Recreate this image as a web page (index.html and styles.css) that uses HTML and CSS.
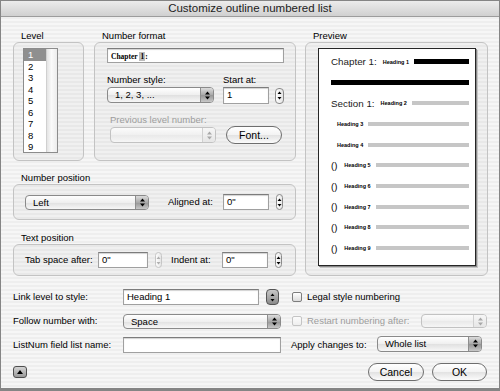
FILE: index.html
```html
<!DOCTYPE html>
<html>

<head>
    <meta charset="UTF-8">
    <title>Customize outline numbered list</title>
    <link rel="stylesheet" href="styles.css">
</head>

<body>
<div class="window">
    <div class="titlebar">Customize outline numbered list</div>

    <div class="content">
        <div class="top">
            <div class="left-col">
                <div class="pair">
                    <!-- Level -->
                    <div class="group level">
                        <div class="glabel">Level</div>
                        <div class="gbox">
                            <div class="listbox">
                                <div class="items">
                                    <div class="item sel">1</div>
                                    <div class="item">2</div>
                                    <div class="item">3</div>
                                    <div class="item">4</div>
                                    <div class="item">5</div>
                                    <div class="item">6</div>
                                    <div class="item">7</div>
                                    <div class="item">8</div>
                                    <div class="item">9</div>
                                </div>
                                <div class="track"></div>
                            </div>
                        </div>
                    </div>

                    <!-- Number format -->
                    <div class="group numfmt">
                        <div class="glabel">Number format</div>
                        <div class="gbox">
                            <div class="field fmt-field"><span class="fmt-text">Chapter <span class="code">1</span>:</span></div>
                            <div class="fmt-row">
                                <div class="lbl">Number style:</div>
                                <div class="lbl">Start at:</div>
                                <div class="popup w-style">
                                    <span class="val">1, 2, 3, ...</span>
                                    <span class="arrows"><svg width="5" height="9" viewBox="0 0 5 9"><path d="M0 3.5 2.5 .5 5 3.5ZM0 5.5 2.5 8.5 5 5.5Z"/></svg></span>
                                </div>
                                <div class="spin-wrap">
                                    <div class="field w-start">1</div>
                                    <div class="spinner sp-start"><svg width="5" height="11" viewBox="0 0 5 11"><path d="M.5 4 2.5 1.5 4.5 4ZM.5 7 2.5 9.5 4.5 7Z"/></svg></div>
                                </div>
                            </div>
                            <div class="lbl dim prev-lbl">Previous level number:</div>
                            <div class="prev-row">
                                <div class="popup off w-prev">
                                    <span class="val"></span>
                                    <span class="arrows"><svg width="5" height="9" viewBox="0 0 5 9"><path d="M0 3.5 2.5 .5 5 3.5ZM0 5.5 2.5 8.5 5 5.5Z"/></svg></span>
                                </div>
                                <div class="btn font-btn">Font...</div>
                            </div>
                        </div>
                    </div>
                </div>

                <!-- Number position -->
                <div class="group numpos">
                    <div class="glabel">Number position</div>
                    <div class="gbox row-box">
                        <div class="popup w-left">
                            <span class="val">Left</span>
                            <span class="arrows"><svg width="5" height="9" viewBox="0 0 5 9"><path d="M0 3.5 2.5 .5 5 3.5ZM0 5.5 2.5 8.5 5 5.5Z"/></svg></span>
                        </div>
                        <div class="lbl l-aligned">Aligned at:</div>
                        <div class="field w-num">0"</div>
                        <div class="spinner small"><svg width="5" height="11" viewBox="0 0 5 11"><path d="M.5 4 2.5 1.5 4.5 4ZM.5 7 2.5 9.5 4.5 7Z"/></svg></div>
                    </div>
                </div>

                <!-- Text position -->
                <div class="group textpos">
                    <div class="glabel">Text position</div>
                    <div class="gbox row-box">
                        <div class="lbl l-tab">Tab space after:</div>
                        <div class="field w-tab">0"</div>
                        <div class="spinner small off sp-tab"><svg width="5" height="11" viewBox="0 0 5 11"><path d="M.5 4 2.5 1.5 4.5 4ZM.5 7 2.5 9.5 4.5 7Z"/></svg></div>
                        <div class="lbl l-indent">Indent at:</div>
                        <div class="field w-num">0"</div>
                        <div class="spinner small"><svg width="5" height="11" viewBox="0 0 5 11"><path d="M.5 4 2.5 1.5 4.5 4ZM.5 7 2.5 9.5 4.5 7Z"/></svg></div>
                    </div>
                </div>
            </div>

            <!-- Preview -->
            <div class="group preview">
                <div class="glabel">Preview</div>
                <div class="gbox">
                    <div class="page">
                        <div class="pv-row"><span class="big">Chapter 1:</span><span class="tiny t1">Heading 1</span><span class="bar black"></span></div>
                        <div class="pv-row"><span class="bar black"></span></div>
                        <div class="pv-row"><span class="big">Section 1:</span><span class="tiny t1">Heading 2</span><span class="bar"></span></div>
                        <div class="pv-row ind"><span class="tiny">Heading 3</span><span class="bar"></span></div>
                        <div class="pv-row ind"><span class="tiny">Heading 4</span><span class="bar"></span></div>
                        <div class="pv-row"><span class="paren">()</span><span class="tiny t2">Heading 5</span><span class="bar"></span></div>
                        <div class="pv-row"><span class="paren">()</span><span class="tiny t2">Heading 6</span><span class="bar"></span></div>
                        <div class="pv-row"><span class="paren">()</span><span class="tiny t2">Heading 7</span><span class="bar"></span></div>
                        <div class="pv-row"><span class="paren">()</span><span class="tiny t2">Heading 8</span><span class="bar"></span></div>
                        <div class="pv-row"><span class="paren">()</span><span class="tiny t2">Heading 9</span><span class="bar"></span></div>
                    </div>
                </div>
            </div>
        </div>

        <!-- lower options -->
        <div class="form">
            <div class="frow">
                <div class="lbl flabel">Link level to style:</div>
                <div class="field w-link">Heading 1</div>
                <div class="spinner dark"><svg width="5" height="11" viewBox="0 0 5 11"><path d="M.5 4 2.5 1.5 4.5 4ZM.5 7 2.5 9.5 4.5 7Z"/></svg></div>
                <div class="check c-legal"></div>
                <div class="lbl">Legal style numbering</div>
            </div>
            <div class="frow">
                <div class="lbl flabel">Follow number with:</div>
                <div class="popup w-wide">
                    <span class="val">Space</span>
                    <span class="arrows"><svg width="5" height="9" viewBox="0 0 5 9"><path d="M0 3.5 2.5 .5 5 3.5ZM0 5.5 2.5 8.5 5 5.5Z"/></svg></span>
                </div>
                <div class="check off c-restart"></div>
                <div class="lbl dim">Restart numbering after:</div>
                <div class="popup off w-restart">
                    <span class="val"></span>
                    <span class="arrows"><svg width="5" height="9" viewBox="0 0 5 9"><path d="M0 3.5 2.5 .5 5 3.5ZM0 5.5 2.5 8.5 5 5.5Z"/></svg></span>
                </div>
            </div>
            <div class="frow">
                <div class="lbl flabel">ListNum field list name:</div>
                <div class="field w-wide"></div>
                <div class="lbl l-apply">Apply changes to:</div>
                <div class="popup w-apply">
                    <span class="val">Whole list</span>
                    <span class="arrows"><svg width="5" height="9" viewBox="0 0 5 9"><path d="M0 3.5 2.5 .5 5 3.5ZM0 5.5 2.5 8.5 5 5.5Z"/></svg></span>
                </div>
            </div>
        </div>

        <div class="footer">
            <div class="disclose"><svg width="6" height="4" viewBox="0 0 6 4"><path d="M0 4 3 0 6 4Z"/></svg></div>
            <div class="btn b-cancel">Cancel</div>
            <div class="btn b-ok">OK</div>
        </div>
    </div>
</div>
</body>

</html>
```

FILE: styles.css
```css
html, body {
    margin: 0;
}

body {
    font-family: "Liberation Sans", Arial, sans-serif;
    font-size: 9.5px;
    color: #000;
}

.window {
    width: 500px;
    height: 391px;
    box-sizing: border-box;
    border: 1px solid #858585;
    border-bottom-width: 3px;
    background: repeating-linear-gradient(to bottom, #eeeeee 0, #eeeeee 2px, #f6f6f6 2px, #f6f6f6 4px);
}

.titlebar {
    height: 15px;
    line-height: 15px;
    text-align: center;
    font-size: 11.5px;
    color: #1c1c1c;
    border-bottom: 1px solid #9c9c9c;
    background: linear-gradient(#ececec, #d0d0d0);
}

.content {
    padding: 12px 11px 0 12px;
}

/* group boxes */
.top {
    display: flex;
    gap: 9px;
}

.left-col {
    width: 283px;
}

.pair {
    display: flex;
    gap: 10px;
}

.glabel {
    line-height: 13px;
    padding-left: 8px;
}

.gbox {
    box-sizing: border-box;
    border: 1px solid #c3c3c3;
    border-radius: 6px;
    background: rgba(0, 0, 0, 0.025);
}

.level {
    width: 71px;
}

.level .gbox {
    height: 119px;
    padding: 5px 0 0 9px;
}

.numfmt {
    width: 202px;
}

.numfmt .gbox {
    height: 119px;
    padding: 5px 0 0 12px;
}

.numpos {
    margin-top: 10px;
}

.numpos .gbox {
    height: 36px;
    padding-left: 11px;
}

.textpos {
    margin-top: 11px;
}

.textpos .gbox {
    height: 32px;
    padding-left: 11px;
}

.row-box {
    display: flex;
    align-items: center;
}

.preview {
    width: 183px;
}

.preview .gbox {
    height: 234px;
    padding: 5px 0 0 12px;
}

/* level list */
.listbox {
    display: flex;
    width: 35px;
    height: 105px;
    box-sizing: border-box;
    border: 1px solid #8c8c8c;
    background: #fff;
}

.items {
    width: 22px;
}

.item {
    height: 11.5px;
    line-height: 11.5px;
    padding-left: 4px;
}

.item.sel {
    background: #8f8f8f;
    color: #fff;
}

.track {
    flex: 1;
    border-left: 1px solid #d0d0d0;
    background: linear-gradient(to right, #e4e4e4, #fafafa 45%, #ececec);
}

/* basic controls */
.lbl {
    line-height: 12px;
    white-space: nowrap;
    flex: none;
}

.dim {
    color: #9d9d9d;
}

.field {
    box-sizing: border-box;
    height: 16px;
    line-height: 14px;
    padding-left: 3px;
    border: 1px solid #a0a0a0;
    border-top-color: #7c7c7c;
    background: #fff;
    box-shadow: inset 0 1px 1px rgba(0, 0, 0, 0.18);
    flex: none;
}

.popup {
    display: flex;
    box-sizing: border-box;
    height: 15px;
    border: 1px solid #8a8a8a;
    border-radius: 4px;
    background: linear-gradient(#ffffff, #efefef 50%, #e0e0e0 51%, #f7f7f7);
    flex: none;
    overflow: hidden;
}

.popup .val {
    flex: 1;
    padding-left: 7px;
    line-height: 13px;
}

.popup .arrows {
    width: 12px;
    display: flex;
    align-items: center;
    justify-content: center;
    border-left: 1px solid #8e8e8e;
    background: linear-gradient(#dcdcdc, #a8a8a8 50%, #959595 51%, #c8c8c8);
}

.popup.off {
    border-color: #c2c2c2;
    background: linear-gradient(#fbfbfb, #f0f0f0 50%, #e9e9e9 51%, #f6f6f6);
}

.popup.off .arrows {
    border-left-color: #d0d0d0;
    background: linear-gradient(#f6f6f6, #e6e6e6);
}

.popup.off svg {
    fill: #a8a8a8;
}

.spinner {
    box-sizing: border-box;
    width: 9px;
    height: 16px;
    border: 1px solid #8a8a8a;
    border-radius: 4px;
    display: flex;
    align-items: center;
    justify-content: center;
    background: linear-gradient(to right, #fdfdfd, #e6e6e6);
    flex: none;
}

.spinner svg {
    flex: none;
}

.spinner.small {
    width: 7px;
    margin-left: 7px;
}

.spinner.off {
    border-color: #c6c6c6;
}

.spinner.off svg {
    fill: #b0b0b0;
}

.spinner.dark {
    width: 13px;
    margin-left: 7px;
    border-color: #555;
    background: linear-gradient(#c8c8c8, #8a8a8a);
}

.check {
    box-sizing: border-box;
    width: 10px;
    height: 10px;
    border: 1px solid #7d7d7d;
    border-radius: 2px;
    background: linear-gradient(#ffffff, #dcdcdc);
    flex: none;
}

.check.off {
    border-color: #c4c4c4;
    background: linear-gradient(#fbfbfb, #eeeeee);
}

.btn {
    box-sizing: border-box;
    height: 18px;
    line-height: 16px;
    text-align: center;
    font-size: 10.5px;
    border: 1px solid #6e6e6e;
    border-radius: 9px;
    background: linear-gradient(#ffffff, #f3f3f3 50%, #e2e2e2 51%, #fbfbfb);
    flex: none;
}

/* number format box */
.fmt-field {
    width: 177px;
    height: 15px;
    line-height: 13px;
}

.fmt-text {
    font-family: "Liberation Serif", "Times New Roman", serif;
    font-weight: bold;
    font-size: 7.5px;
}

.code {
    background: #bdbdbd;
    padding: 0 1px;
}

.fmt-row {
    display: grid;
    grid-template-columns: 116px auto;
    row-gap: 1px;
    margin-top: 11px;
}

.w-style {
    width: 107px;
    height: 16px;
}

.spin-wrap {
    display: flex;
    align-items: center;
}

.w-start {
    width: 46px;
    height: 17px;
}

.sp-start {
    margin-left: 6px;
}

.prev-lbl {
    margin: 10px 0 0 3px;
}

.prev-row {
    display: flex;
    align-items: flex-end;
    margin-left: 3px;
}

.w-prev {
    width: 106px;
    height: 16px;
    margin-bottom: 1px;
}

.font-btn {
    width: 56px;
    margin-left: 10px;
}

/* number / text position */
.w-left {
    width: 124px;
    margin-top: 1px;
}

.l-aligned {
    width: 55px;
    margin-left: 19px;
}

.w-num {
    width: 46px;
}

.l-tab {
    width: 73px;
}

.w-tab {
    width: 50px;
}

.sp-tab {
    margin-left: 8px;
}

.l-indent {
    width: 51px;
    margin-left: 9px;
}

/* preview page */
.page {
    box-sizing: border-box;
    width: 158px;
    height: 218px;
    border: 1px solid #262626;
    box-shadow: 1px 1px 0 #8a8a8a, 2px 2px 0 #c6c6c6;
    background: #fff;
    padding: 2.6px 6px 0 12px;
}

.pv-row {
    display: flex;
    align-items: center;
    height: 20.7px;
}

.pv-row.ind {
    padding-left: 6px;
}

.big {
    font-size: 9.8px;
    color: #1a1a1a;
}

.tiny {
    font-size: 5.5px;
    font-weight: bold;
    white-space: nowrap;
}

.tiny.t1 {
    margin-left: 6px;
}

.tiny.t2 {
    margin-left: 7px;
}

.paren {
    font-size: 9.5px;
}

.bar {
    flex: 1;
    height: 4px;
    margin-left: 5px;
    background: #c6c6c6;
}

.bar.black {
    height: 5px;
    background: #000;
}

.pv-row > .bar:first-child {
    margin-left: 0;
}

/* lower form */
.form {
    display: flex;
    flex-direction: column;
    gap: 8px;
    margin-top: 13px;
}

.frow {
    display: flex;
    align-items: center;
    height: 16px;
}

.flabel {
    width: 110px;
}

.w-link {
    width: 136px;
}

.c-legal {
    margin: 0 5px 0 13px;
}

.w-wide {
    width: 158px;
}

.c-restart {
    margin: 0 5px 0 11px;
}

.w-restart {
    width: 66px;
    height: 14px;
    margin: 0 1px 0 auto;
}

.l-apply {
    width: 86px;
    margin-left: 10px;
}

.w-apply {
    width: 105px;
    height: 16px;
    margin-top: -3px;
}

/* footer */
.footer {
    display: flex;
    align-items: center;
    margin-top: 10px;
}

.disclose {
    box-sizing: border-box;
    width: 14px;
    height: 12px;
    border: 1px solid #4e4e4e;
    border-radius: 3px;
    display: flex;
    align-items: center;
    justify-content: center;
    background: linear-gradient(#d4d4d4, #9a9a9a);
}

.b-cancel {
    width: 56px;
    margin-left: auto;
}

.b-ok {
    width: 55px;
    margin-left: 8px;
    margin-right: 1px;
}
```
